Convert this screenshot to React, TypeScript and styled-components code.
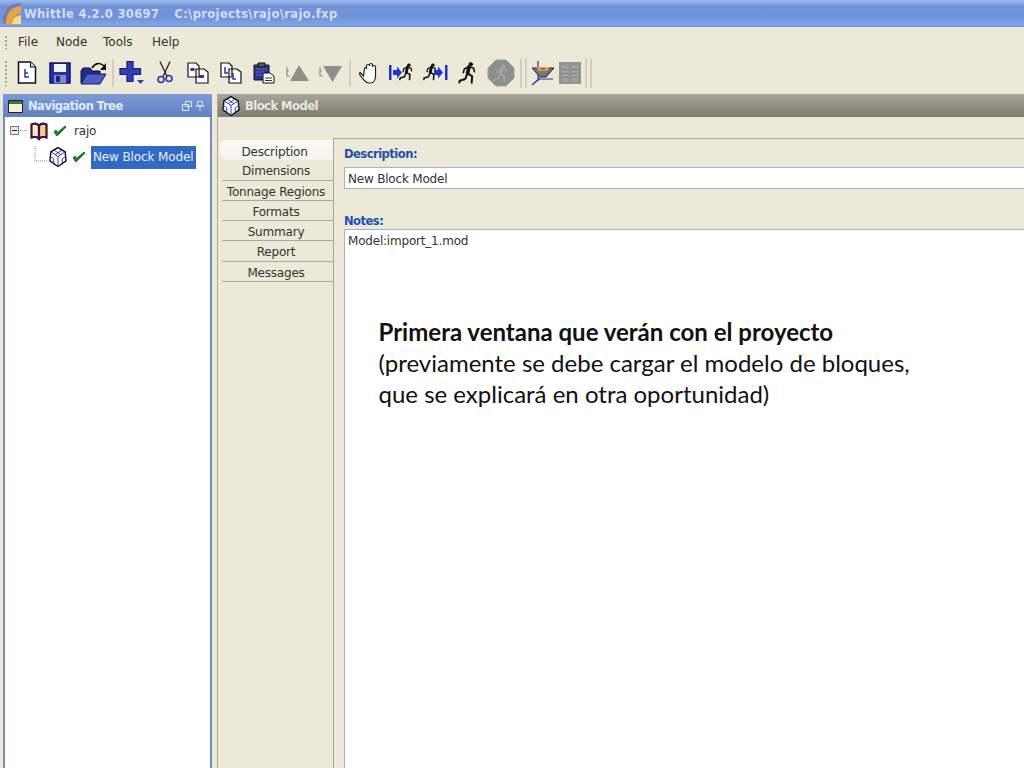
import React from "react";
import styled, { createGlobalStyle } from "styled-components";

const Global = createGlobalStyle`
  html, body { margin: 0; padding: 0; height: 100%; overflow: hidden; background: #ece9d8; }
  #root { height: 100%; }
`;

const Page = styled.div`
  position: relative;
  width: 1024px;
  height: 768px;
  overflow: hidden;
  display: flex;
  flex-direction: column;
  background: #ece9d8;
  font-family: "DejaVu Sans", sans-serif;
  color: #222;
`;

const TitleBar = styled.div`
  height: 27px;
  flex: none;
  display: flex;
  align-items: center;
  gap: 3px;
  padding-left: 3px;
  background: linear-gradient(180deg, #9cbcec 0%, #7395da 22%, #6f92d9 65%, #80a6ea 95%, #5f7fc8 100%);
  color: #d3dff6;
  font-weight: 700;
  font-size: 11.5px;
  white-space: pre;
`;

const TitleText = styled.span`
  letter-spacing: 0.37px;
`;

const TitleGap = styled.span`
  display: inline-block;
  width: 15px;
`;

const MenuBar = styled.div`
  height: 27px;
  flex: none;
  display: flex;
  align-items: center;
  margin-top: 1px;
  padding-left: 5px;
  font-size: 12px;
  color: #333;
`;

const Grip = styled.div<{ $h: number }>`
  width: 2px;
  height: ${(p) => p.$h}px;
  flex: none;
  background-image: radial-gradient(circle, #a5a294 1px, transparent 1.1px);
  background-size: 2px 4px;
`;

const MenuItem = styled.span<{ $w: number }>`
  width: ${(p) => p.$w}px;
  flex: none;
`;

const MenuList = styled.div`
  display: flex;
  padding-left: 11px;
`;

const Toolbar = styled.div`
  height: 38px;
  box-sizing: border-box;
  padding: 0 0 3px 5px;
  flex: none;
  display: flex;
  align-items: center;
`;

const ToolGroup = styled.div`
  display: flex;
  align-items: center;
  margin-left: 3.5px;
`;

const Tool = styled.div<{ $w: number }>`
  width: ${(p) => p.$w}px;
  height: 30px;
  flex: none;
  display: flex;
  align-items: center;
  justify-content: center;
`;

const Separator = styled.div<{ $double?: boolean }>`
  width: 2px;
  height: ${(p) => (p.$double ? 30 : 28)}px;
  flex: none;
  margin: 0 ${(p) => (p.$double ? 7 : 2)}px 0 2px;
  background: #d2cfc0;
  box-shadow: ${(p) => (p.$double ? "5px 0 0 #d2cfc0" : "none")};
`;

const Panels = styled.div`
  flex: 1;
  display: flex;
  gap: 5px;
  padding: 1px 0 0 3px;
  min-height: 0;
`;

const TreePanel = styled.section`
  width: 209px;
  flex: none;
  display: flex;
  flex-direction: column;
  background: #6f8fc9;
  padding: 0 2px;
  box-sizing: border-box;
  border-radius: 2px 2px 0 0;
`;

const PanelHead = styled.header`
  height: 23px;
  box-sizing: border-box;
  padding-top: 1px;
  flex: none;
  display: flex;
  align-items: center;
  gap: 5px;
  font-weight: 700;
  font-size: 11.5px;
  letter-spacing: -0.5px;
`;

const TreeHead = styled(PanelHead)`
  margin: 0 -2px;
  padding: 1px 7px 0 5px;
  background: linear-gradient(180deg, #7d9bd6 0%, #5f82c4 100%);
  color: #e3ebfa;
  justify-content: space-between;
`;

const HeadLabel = styled.span`
  display: flex;
  align-items: center;
  gap: 5px;
`;

const HeadButtons = styled.span`
  display: flex;
  gap: 3px;
`;

const TreeBody = styled.div`
  flex: 1;
  background: #fff;
  padding: 1px 0 0 5px;
  font-size: 12px;
`;

const TreeRow = styled.div<{ $indent?: number }>`
  height: 26px;
  display: flex;
  align-items: center;
  padding-left: ${(p) => p.$indent ?? 0}px;
`;

const TreeLabel = styled.span<{ $selected?: boolean }>`
  padding: 3.5px 2px;
  line-height: 16px;
  background: ${(p) => (p.$selected ? "#316ac5" : "transparent")};
  color: ${(p) => (p.$selected ? "#e8eefb" : "#333")};
  margin-left: 5px;
  letter-spacing: ${(p) => (p.$selected ? "-0.12px" : "-0.2px")};
`;

const Spacer = styled.span`
  width: 5px;
  flex: none;
`;

const ModelPanel = styled.section`
  flex: 1;
  display: flex;
  flex-direction: column;
  min-width: 0;
  border-left: 1px solid #aca899;
`;

const ModelHead = styled(PanelHead)`
  padding-left: 4px;
  background: linear-gradient(180deg, #a8a698 0%, #7d7b6e 100%);
  color: #e8e8e4;
`;

const ModelBody = styled.div`
  flex: 1;
  display: flex;
  padding-top: 21px;
  min-height: 0;
`;

const TabColumn = styled.nav`
  width: 115px;
  flex: none;
  padding: 2px 0 0 2px;
  box-sizing: border-box;
`;

const Tab = styled.div<{ $active?: boolean }>`
  height: 20.3px;
  box-sizing: border-box;
  padding-top: ${(p) => (p.$active ? 4 : 3)}px;
  text-align: center;
  font-size: 12px;
  line-height: 17px;
  letter-spacing: -0.2px;
  white-space: nowrap;
  color: #333;
  margin-left: ${(p) => (p.$active ? "0" : "2px")};
  padding-right: ${(p) => (p.$active ? "4px" : "3px")};
  border-bottom: ${(p) => (p.$active ? "0" : "1px solid #aca899")};
  background: ${(p) => (p.$active ? "linear-gradient(180deg,#fbfaf6,#f4f2e9)" : "transparent")};
  border-radius: ${(p) => (p.$active ? "6px 0 0 6px" : "0")};
`;

const Content = styled.div`
  flex: 1;
  min-width: 0;
  border-top: 1px solid #aca899;
  border-left: 1px solid #aca899;
  padding: 8px 0 0 10px;
  display: flex;
  flex-direction: column;
`;

const FieldLabel = styled.label`
  color: #1d4fb3;
  font-weight: 700;
  font-size: 11.5px;
  line-height: 14px;
  letter-spacing: -0.5px;
`;

const DescriptionBox = styled.div`
  margin: 6px 0 25px;
  height: 22px;
  box-sizing: border-box;
  background: #fff;
  border: 1px solid #a5b3c5;
  border-right: 0;
  padding: 1px 0 0 3px;
  font-size: 12px;
  line-height: 21px;
  letter-spacing: -0.2px;
  color: #333;
`;

const NotesBox = styled.div`
  margin-top: 1px;
  flex: 1;
  background: #fff;
  border: 1px solid #a5b3c5;
  border-right: 0;
  border-bottom: 0;
  padding: 4px 0 0 3px;
  font-size: 12px;
  line-height: 15px;
  letter-spacing: -0.2px;
  color: #333;
`;

const Annotation = styled.div`
  position: absolute;
  left: 378.5px;
  top: 317px;
  font-family: Lato, "Open Sans", sans-serif;
  font-size: 24px;
  line-height: 30.8px;
  color: #111;
  white-space: nowrap;
`;

const AnnotationLead = styled.div`
  font-weight: 700;
`;

const Doc = () => (
  <svg width="20" height="23" viewBox="0 0 20 23">
    <path d="M1.500 1h12l5 5v16h-17z" fill="#fff" stroke="#111" strokeWidth="1.500" />
    <path d="M13.500 1v5h5" fill="#ddd" stroke="#111" strokeWidth="1.100" />
    <path d="M8 8v8h4M8 12h3" fill="none" stroke="#2a35b0" strokeWidth="1.500" />
  </svg>
);

const Save = () => (
  <svg width="22" height="22" viewBox="0 0 22 22">
    <path d="M1 1h20v20H1z" fill="#2330a8" stroke="#101560" strokeWidth="1.500" />
    <path d="M5 2h12v8H5z" fill="#f4f4f4" />
    <path d="M5 13h12v8H5z" fill="#7f88d2" />
    <path d="M7 14h4v6H7z" fill="#1a2480" />
  </svg>
);

const FolderOpen = () => (
  <svg width="27" height="24" viewBox="0 0 27 24">
    <path d="M1 10l2-3h7l2 3h8v12H1z" fill="#1f2c90" stroke="#111" />
    <path d="M1 23l6-10h19l-6 10z" fill="#4d5ec6" stroke="#16205f" />
    <path d="M12 7c3-5 8-6 12-2" fill="none" stroke="#111" strokeWidth="1.600" />
    <path d="M26 2v7h-6z" fill="#111" />
  </svg>
);

const AddNode = () => (
  <svg width="26" height="26" viewBox="0 0 26 26">
    <path d="M8 1.500h6v7h7.500v6H14v7H8v-7H1v-6h7z" fill="#2f3fb8" stroke="#141c70" strokeWidth="1.200" />
    <path d="M18 20h7l-3.500 4z" fill="#2f3fb8" />
  </svg>
);

const Scissors = () => (
  <svg width="16" height="23" viewBox="0 0 16 23">
    <path d="M3 .5l7 15M13 .5L6 15.500" fill="none" stroke="#222" strokeWidth="1.300" />
    <circle cx="4" cy="18.500" r="3" fill="none" stroke="#2430a8" strokeWidth="1.600" />
    <circle cx="12" cy="17.500" r="3" fill="none" stroke="#2430a8" strokeWidth="1.600" />
  </svg>
);

const CopyDocs = ({ lettered }: { lettered?: boolean }) => (
  <svg width="22" height="22" viewBox="0 0 22 22">
    <path d="M1 1h8l3 3v11H1zM9 7h8l4 3v11H9z" fill="#fff" stroke="#111" strokeWidth="1.200" />
    {lettered ? (
      <path d="M5 5v6h3M13 11v6h3" fill="none" stroke="#2a35b0" strokeWidth="1.500" />
    ) : (
      <path d="M3.500 6h4v3h-4zM12 13h5v3h-5z" fill="#2a35b0" />
    )}
  </svg>
);

const Paste = () => (
  <svg width="22" height="23" viewBox="0 0 22 23">
    <path d="M1 4h15v15H1z" fill="#2a3596" stroke="#111" />
    <path d="M5 2h7v4H5z" fill="#555" stroke="#111" />
    <path d="M3 8h11M3 11h8M3 14h8" stroke="#5a66c4" />
    <path d="M10 12h7l4 3v7H10z" fill="#fff" stroke="#111" />
    <path d="M12 17h7M12 19.500h7" stroke="#333" />
  </svg>
);

const Move = ({ down }: { down?: boolean }) => (
  <svg width="24" height="20" viewBox="0 0 24 20">
    <path d="M2 4v9h3M2 8h2" fill="none" stroke="#8d8d8d" strokeWidth="1.200" />
    <path d={down ? "M5 3h19l-9.500 16z" : "M14 2l10 16H5z"} fill="#8e8e8e" />
  </svg>
);

const Hand = () => (
  <svg width="20" height="22" viewBox="0 0 20 22">
    <path
      d="M1.500 11l3 3 1-7c0-2 2-2 2 0l0-3c0-2 3-2 3 0v-1c0-2 3-2 3 0v2c0-2 3-2 3 0v9c0 4-2 7-5 7H10c-3 0-4-2-5-3l-4-5c-1-2 0-3 .5-2z"
      fill="#fff"
      stroke="#222"
      strokeWidth="1.200"
    />
  </svg>
);

const RunnerFigure = ({ color = "#111" }: { color?: string }) => (
  <g fill="none" stroke={color} strokeWidth="3" strokeLinecap="round" strokeLinejoin="round">
    <circle cx="15" cy="3" r="2" fill={color} strokeWidth="0.800" />
    <path d="M13 6l-1.500 7" strokeWidth="4" />
    <path d="M13 6l5 1 1 4" strokeWidth="1.800" />
    <path d="M12 6L8 8l-1 4" strokeWidth="1.800" />
    <path d="M11.500 13l5 3-.5 7" strokeWidth="2.200" />
    <path d="M11 14l-2 5-6 2-.5 2" strokeWidth="2.200" />
  </g>
);

const Runner = () => (
  <svg width="22" height="26" viewBox="0 0 24 25">
    <RunnerFigure />
  </svg>
);

const RunFrom = () => (
  <svg width="26" height="24" viewBox="0 0 26 24">
    <path d="M0 4h2.500v15H0zM4 9h4V5.500l5 6-5 6V14H4z" fill="#2430d0" />
    <g transform="translate(9 2) scale(.72)"><RunnerFigure /></g>
  </svg>
);

const RunTo = () => (
  <svg width="26" height="24" viewBox="0 0 26 24">
    <g transform="translate(0 2) scale(.72)"><RunnerFigure /></g>
    <path d="M12 9h4V5.500l5 6-5 6V14h-4zM23 4h2.500v15H23z" fill="#2430d0" />
  </svg>
);

const StopRun = () => (
  <svg width="28" height="28" viewBox="0 0 28 28">
    <path d="M9 1h10l8 8v10l-8 8H9l-8-8V9z" fill="#8e8e8e" stroke="#9c9c9c" />
    <g transform="translate(5 5) scale(.75)"><RunnerFigure color="#a6a6a6" /></g>
  </svg>
);

const Bowl = () => (
  <svg width="24" height="26" viewBox="0 0 24 26">
    <path d="M7 1v20M1 25l8-7M7 19h15" fill="none" stroke="#2430b0" strokeWidth="1.200" />
    <path d="M1 8h22l-8 9H9z" fill="#777" stroke="#222" />
    <path d="M5 7h14l-3 4H8z" fill="#d9a25c" />
    <path d="M10 8h4v2h-4z" fill="#d8501c" />
  </svg>
);

const Grid = () => (
  <svg width="22" height="22" viewBox="0 0 23 23">
    <path d="M0 0h23v23H0z" fill="#939393" />
    <path d="M3 4h7v16H3zM13 4h7v16h-7z" fill="#a3a3a3" />
    <path d="M3 8h7M3 12h7M3 16h7M13 8h7M13 12h7M13 16h7" stroke="#7d7d7d" />
  </svg>
);

const BlockIcon = () => (
  <svg width="18" height="22" viewBox="0 0 19 22">
    <path d="M9.500 1L17 5.500 18 15 9.500 21 1 15 2 5.500z" fill="#fff" stroke="#111" strokeWidth="1.500" />
    <path d="M2 5.500l7.500 5 7.500-5M9.500 10.500V21M5 3.500l7.500 5M14 3.500L6.500 8.500M1 10l4 3v6M18 10l-4 3v6" fill="none" stroke="#2a35c0" />
  </svg>
);

const Book = () => (
  <svg width="18" height="19" viewBox="0 0 18 19">
    <path d="M1.500 2.500c3-1.500 5.500-1 7.500 1v13c-2-1.500-4.500-2-7.500-1z" fill="#f5efc8" stroke="#3f0d48" strokeWidth="2.200" />
    <path d="M16.500 2.500c-3-1.500-5.500-1-7.500 1v13c2-1.500 4.500-2 7.500-1z" fill="#f3d27a" stroke="#3f0d48" strokeWidth="2.200" />
  </svg>
);

const Check = () => (
  <svg width="14" height="13" viewBox="0 0 14 13">
    <path d="M1 7l3 4 9-9-1-1-7.500 6.500L3 5z" fill="#1c7a32" stroke="#1c7a32" />
  </svg>
);

const Expander = () => (
  <svg width="20" height="10" viewBox="0 0 20 10">
    <path d="M.5.500h8v8h-8z" fill="#e9e9e4" stroke="#777" />
    <path d="M2 4.500h5" stroke="#222" />
    <path d="M10 4.500h8" stroke="#888" strokeDasharray="1 1" />
  </svg>
);

const Branch = () => (
  <svg width="15" height="22" viewBox="0 0 15 22">
    <path d="M1 0v15h13" fill="none" stroke="#888" strokeDasharray="1 1" />
  </svg>
);

const WindowIcon = () => (
  <svg width="15" height="13" viewBox="0 0 15 13">
    <path d="M.5.500h14v12H.5z" fill="#f4f1d4" stroke="#222" />
    <path d="M1 1h13v3H1z" fill="#3b7a3b" />
  </svg>
);

const MiniRestore = () => (
  <svg width="10" height="10" viewBox="0 0 10 10">
    <path d="M3.500.500h6v5h-6zM.5 3.500h6v6h-6z" fill="none" stroke="#dfe7f6" />
  </svg>
);

const MiniPin = () => (
  <svg width="10" height="10" viewBox="0 0 10 10">
    <path d="M2.500.500h5v4h-5zM.5 5h9M5 5v5" fill="none" stroke="#dfe7f6" />
  </svg>
);

const AppLogo = () => (
  <svg width="18" height="22" viewBox="0 0 18 22">
    <path d="M3 21C3 11 8 5 18 3v7c-5 1-8 5-8 11z" fill="#e9a33a" />
    <path d="M1 21C1 9 7 2 18 1" fill="none" stroke="#7c7f8a" strokeWidth="2.600" />
    <path d="M9 21c1-5 3-8 9-9v9z" fill="#f7e27a" />
  </svg>
);

const menus: [string, number][] = [["File", 38], ["Node", 47], ["Tools", 49], ["Help", 40]];
const tabs = ["Description", "Dimensions", "Tonnage Regions", "Formats", "Summary", "Report", "Messages"];

export default function App() {
  return (
    <Page>
      <Global />
      <TitleBar>
        <AppLogo />
        <TitleText>
          Whittle 4.2.0 30697<TitleGap />{"C:\\projects\\rajo\\rajo.fxp"}
        </TitleText>
      </TitleBar>
      <MenuBar>
        <Grip $h={14} />
        <MenuList>
          {menus.map(([m, w]) => (
            <MenuItem key={m} $w={w}>{m}</MenuItem>
          ))}
        </MenuList>
      </MenuBar>
      <Toolbar>
        <Grip $h={26} />
        <ToolGroup>
          <Tool $w={33}><Doc /></Tool>
          <Tool $w={33}><Save /></Tool>
          <Tool $w={33}><FolderOpen /></Tool>
          <Separator />
          <Tool $w={33}><AddNode /></Tool>
          <Tool $w={33}><Scissors /></Tool>
          <Tool $w={33}><CopyDocs /></Tool>
          <Tool $w={33}><CopyDocs lettered /></Tool>
          <Tool $w={33}><Paste /></Tool>
          <Tool $w={33}><Move /></Tool>
          <Tool $w={33}><Move down /></Tool>
          <Separator />
          <Tool $w={33}><Hand /></Tool>
          <Tool $w={33}><RunFrom /></Tool>
          <Tool $w={33}><RunTo /></Tool>
          <Tool $w={33}><Runner /></Tool>
          <Tool $w={33}><StopRun /></Tool>
          <Separator $double />
          <Tool $w={28}><Bowl /></Tool>
          <Tool $w={26}><Grid /></Tool>
          <Separator $double />
        </ToolGroup>
      </Toolbar>
      <Panels>
        <TreePanel>
          <TreeHead>
            <HeadLabel><WindowIcon />Navigation Tree</HeadLabel>
            <HeadButtons><MiniRestore /><MiniPin /></HeadButtons>
          </TreeHead>
          <TreeBody>
            <TreeRow>
              <Expander />
              <Book />
              <Spacer />
              <Check />
              <TreeLabel>rajo</TreeLabel>
            </TreeRow>
            <TreeRow $indent={24}>
              <Branch />
              <BlockIcon />
              <Spacer />
              <Check />
              <TreeLabel $selected>New Block Model</TreeLabel>
            </TreeRow>
          </TreeBody>
        </TreePanel>
        <ModelPanel>
          <ModelHead><BlockIcon />Block Model</ModelHead>
          <ModelBody>
            <TabColumn>
              {tabs.map((t, i) => (
                <Tab key={t} $active={i === 0}>{t}</Tab>
              ))}
            </TabColumn>
            <Content>
              <FieldLabel>Description:</FieldLabel>
              <DescriptionBox>New Block Model</DescriptionBox>
              <FieldLabel>Notes:</FieldLabel>
              <NotesBox>Model:import_1.mod</NotesBox>
            </Content>
          </ModelBody>
        </ModelPanel>
      </Panels>
      <Annotation>
        <AnnotationLead>Primera ventana que verán con el proyecto</AnnotationLead>
        <div>(previamente se debe cargar el modelo de bloques,</div>
        <div>que se explicará en otra oportunidad)</div>
      </Annotation>
    </Page>
  );
}
